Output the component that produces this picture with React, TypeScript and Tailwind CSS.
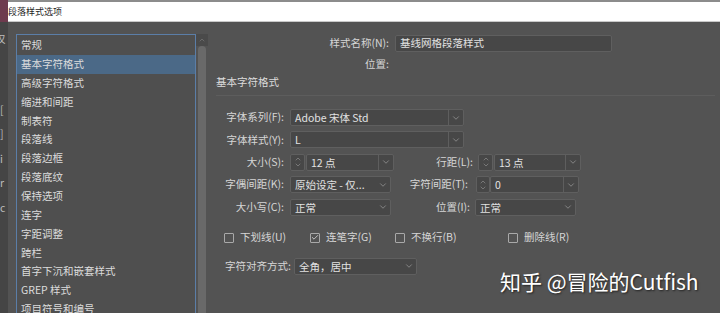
import React from 'react';
import { ChevronDown, ChevronUp, Check } from 'lucide-react';

const items = [
  '常规',
  '基本字符格式',
  '高级字符格式',
  '缩进和间距',
  '制表符',
  '段落线',
  '段落边框',
  '段落底纹',
  '保持选项',
  '连字',
  '字距调整',
  '跨栏',
  '首字下沉和嵌套样式',
  'GREP 样式',
  '项目符号和编号',
];

function Arrow({ divider }: { divider?: boolean }) {
  return (
    <div
      className={
        'flex h-full w-[15px] items-center justify-center ' +
        (divider ? 'border-l border-[#5e5e5e]' : '')
      }
    >
      <ChevronDown size={10} strokeWidth={1.5} className="text-[#a8a8a8]" />
    </div>
  );
}

function Select({ value, w, divider }: { value: string; w: string; divider?: boolean }) {
  return (
    <div
      className={
        'flex h-[17px] shrink-0 items-center rounded-[2px] border border-[#5f5f5f] bg-[#474747] ' + w
      }
    >
      <span className="flex-1 truncate pl-[4px] text-[10.5px] leading-[15px] text-[#e2e2e2]">{value}</span>
      <Arrow divider={divider} />
    </div>
  );
}

function Spinner({ w = 'w-[15px]' }: { w?: string }) {
  return (
    <div
      className={
        'flex h-[17px] shrink-0 flex-col items-center justify-center rounded-[2px] border border-[#5f5f5f] bg-[#474747] ' +
        w
      }
    >
      <ChevronUp size={8} strokeWidth={1.5} className="-mb-[1px] text-[#a8a8a8]" />
      <ChevronDown size={8} strokeWidth={1.5} className="-mt-[1px] text-[#a8a8a8]" />
    </div>
  );
}

function Label({ text, w }: { text: string; w: string }) {
  return (
    <span className={'shrink-0 whitespace-nowrap text-right text-[10.5px] leading-none text-[#d6d6d6] ' + w}>
      {text}
    </span>
  );
}

function CheckItem({ label, checked, w }: { label: string; checked?: boolean; w: string }) {
  return (
    <div className={'flex items-center gap-[6px] ' + w}>
      <div className="flex h-[10px] w-[10px] items-center justify-center rounded-[1px] border border-[#a9a9a9]">
        {checked && <Check size={9} strokeWidth={2.5} className="text-[#d8d8d8]" />}
      </div>
      <span className="text-[10.5px] leading-none text-[#d6d6d6]">{label}</span>
    </div>
  );
}

export default function App() {
  return (
    <div
      className="relative flex h-[313px] w-[720px] overflow-hidden bg-[#535353]"
      style={{ fontFamily: '"Noto Sans CJK SC", "Noto Sans", sans-serif' }}
    >
      {/* strip of the app behind */}
      <div className="flex w-[8px] shrink-0 flex-col overflow-hidden bg-[#454545]">
        <div className="h-[22px] bg-[#6e3b4e]" />
        <div className="flex flex-col items-start gap-[14px] pt-[12px] text-[10.5px] leading-none text-[#bdbdbd]">
          <span className="-ml-[5px]">汉</span>
          <span className="mt-[46px]">[</span>
          <span>]</span>
          <span>i</span>
          <span>r</span>
          <span>c</span>
        </div>
      </div>

      <div className="flex min-w-0 flex-1 flex-col">
        {/* title bar */}
        <div className="flex h-[22px] shrink-0 items-center border-t-[2px] border-b border-t-[#8c8c8c] border-b-[#c9c9c9] bg-white">
          <span className="text-[9px] leading-none text-[#1e1e1e]">段落样式选项</span>
        </div>

        <div className="flex flex-1">
          {/* list */}
          <div className="flex pl-[8px] pt-[12px]">
            <div className="h-[300px] w-[180px] border border-[#5b7ea8] bg-[#4f4f4f] pt-[1px]">
              {items.map((it, i) => (
                <div
                  key={it}
                  className={
                    'flex h-[18.86px] items-center pl-[4px] text-[10.5px] leading-none text-[#dcdcdc] ' +
                    (i === 1 ? 'bg-[#4b6987]' : '')
                  }
                >
                  {it}
                </div>
              ))}
            </div>
            <div className="flex w-[12px] flex-col items-center">
              <div className="flex h-[12px] w-full items-center justify-center bg-[#4a4a4a]">
                <ChevronUp size={8} strokeWidth={1.5} className="text-[#8a8a8a]" />
              </div>
              <div className="h-[300px] w-[8px] rounded-t-[4px] bg-[#696969]" />
            </div>
          </div>

          {/* right panel */}
          <div className="flex flex-1 flex-col">
            <div className="mt-[13px] flex h-[17px] items-center gap-[6px]">
              <Label text="样式名称(N):" w="w-[181px]" />
              <div className="flex h-[17px] w-[217px] items-center rounded-[2px] border border-[#5f5f5f] bg-[#474747] pl-[4px] text-[10.5px] leading-none text-[#e2e2e2]">
                基线网格段落样式
              </div>
            </div>
            <div className="mt-[6px] flex h-[12px] items-center">
              <Label text="位置:" w="w-[181px]" />
            </div>
            <div className="mt-[6px] flex h-[12px] items-center pl-[8px] text-[10.5px] leading-none text-[#dcdcdc]">
              基本字符格式
            </div>
            <div className="ml-[8px] mr-[5px] mt-[7px] h-px bg-[#5d5d5d]" />

            <div className="mt-[13px] flex flex-col gap-[5.4px] pl-[8px]">
              <div className="flex h-[17px] items-center gap-[6px]">
                <Label text="字体系列(F):" w="w-[68px]" />
                <Select value="Adobe 宋体 Std" w="w-[174px]" divider />
              </div>
              <div className="flex h-[17px] items-center gap-[6px]">
                <Label text="字体样式(Y):" w="w-[68px]" />
                <Select value="L" w="w-[174px]" divider />
              </div>
              <div className="flex h-[17px] items-center">
                <div className="flex w-[178px] items-center">
                  <Label text="大小(S):" w="w-[68px]" />
                  <div className="ml-[6px] flex gap-[1px]">
                    <Spinner />
                    <Select value="12 点" w="w-[88px]" divider />
                  </div>
                </div>
                <Label text="行距(L):" w="w-[79px]" />
                <div className="ml-[5px] flex gap-[1px]">
                  <Spinner />
                  <Select value="13 点" w="w-[87px]" divider />
                </div>
              </div>
              <div className="flex h-[17px] items-center">
                <div className="flex w-[178px] items-center">
                  <Label text="字偶间距(K):" w="w-[68px]" />
                  <div className="ml-[6px]">
                    <Select value="原始设定 - 仅..." w="w-[101px]" />
                  </div>
                </div>
                <Label text="字符间距(T):" w="w-[74px]" />
                <div className="ml-[8px] flex">
                  <Spinner w="w-[14px]" />
                  <Select value="0" w="w-[89px]" divider />
                </div>
              </div>
              <div className="flex h-[17px] items-center">
                <div className="flex w-[178px] items-center">
                  <Label text="大小写(C):" w="w-[68px]" />
                  <div className="ml-[6px]">
                    <Select value="正常" w="w-[101px]" />
                  </div>
                </div>
                <Label text="位置(I):" w="w-[76px]" />
                <div className="ml-[5px]">
                  <Select value="正常" w="w-[101px]" />
                </div>
              </div>
            </div>

            <div className="mt-[16px] flex h-[12px] items-center pl-[16px]">
              <CheckItem label="下划线(U)" w="w-[86px]" />
              <CheckItem label="连笔字(G)" checked w="w-[85px]" />
              <CheckItem label="不换行(B)" w="w-[113px]" />
              <CheckItem label="删除线(R)" w="w-[100px]" />
            </div>

            <div className="mt-[14px] flex h-[17px] items-center pl-[17px]">
              <span className="w-[69px] shrink-0 whitespace-nowrap text-[10.5px] leading-none text-[#d6d6d6]">
                字符对齐方式:
              </span>
              <Select value="全角，居中" w="w-[123px]" />
            </div>
          </div>
        </div>
      </div>

      {/* watermark */}
      <div
        className="absolute left-[500px] top-[271px] whitespace-nowrap text-[21px] leading-none text-white"
        style={{ textShadow: '1px 1px 2px rgba(0,0,0,0.6)' }}
      >
        知乎 @冒险的Cutfish
      </div>
    </div>
  );
}
